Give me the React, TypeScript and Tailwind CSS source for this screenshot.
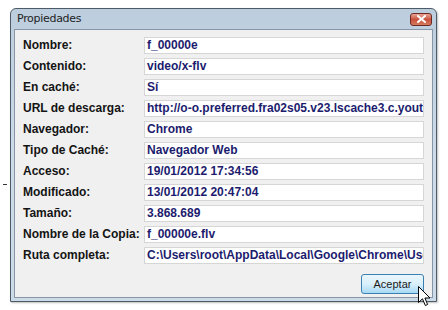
const ROWS: [string, string][] = [
  ['Nombre:', 'f_00000e'],
  ['Contenido:', 'video/x-flv'],
  ['En caché:', 'Sí'],
  ['URL de descarga:', 'http://o-o.preferred.fra02s05.v23.lscache3.c.youtube.com/videoplayback'],
  ['Navegador:', 'Chrome'],
  ['Tipo de Caché:', 'Navegador Web'],
  ['Acceso:', '19/01/2012 17:34:56'],
  ['Modificado:', '13/01/2012 20:47:04'],
  ['Tamaño:', '3.868.689'],
  ['Nombre de la Copia:', 'f_00000e.flv'],
  ['Ruta completa:', 'C:\\Users\\root\\AppData\\Local\\Google\\Chrome\\User Data\\Default\\Cache'],
];

function CloseButton() {
  return (
    <div className="w-[22px] h-[13px] rounded-[3px] border border-[#6e2a22] bg-gradient-to-b from-[#e7a597] via-[#c9503c] to-[#d47a5c] flex items-center justify-center">
      <svg width="9" height="8" viewBox="0 0 9 8">
        <path d="M1 1 L8 7 M8 1 L1 7" stroke="#fff" strokeWidth="2" strokeLinecap="square" />
      </svg>
    </div>
  );
}

function Cursor() {
  return (
    <svg className="absolute left-[418px] top-[286px]" width="13" height="21" viewBox="0 0 13 21">
      <path
        d="M0.5 0.5 L0.5 16.5 L4.5 12.8 L7.3 19.5 L9.6 18.5 L6.9 12 L12 12 Z"
        fill="#fff"
        stroke="#000"
        strokeWidth="1"
        strokeLinejoin="miter"
      />
    </svg>
  );
}

export default function App() {
  return (
    <div className="relative w-[448px] h-[310px] bg-white overflow-hidden pl-[10px] pt-[8px] font-['Liberation_Sans',Arial,sans-serif]">
      <div className="absolute left-[3px] top-[184px] w-[4px] h-[1px] bg-[#333]" />

      {/* window */}
      <div className="w-[427px] h-[294px] rounded-t-[6px] border border-[#4d5b69] bg-gradient-to-b from-[#bccddd] via-[#cddbe9] to-[#cddbe9] flex flex-col px-[3px] pb-[3px] shadow-[1px_1px_2px_rgba(0,0,0,0.25)]">
        <div className="h-[20px] flex items-center justify-between pl-[3px] pr-[1px]">
          <span className="text-[11px] text-[#1e1e1e] font-['DejaVu_Sans',sans-serif] tracking-[-0.3px]">Propiedades</span>
          <CloseButton />
        </div>

        <div className="flex-1 border border-[#8797a8] bg-[#f0f0f0] pl-[8px] pr-[8px] pt-[7px] flex flex-col">
          <div className="flex flex-col gap-[4px]">
            {ROWS.map(([label, value]) => (
              <div key={label} className="flex items-center h-[17px]">
                <div className="w-[121px] shrink-0 text-[12px] leading-[17px] font-bold text-[#141414]">{label}</div>
                <div className="w-[281px] h-[17px] border border-[#d6d6d6] bg-white pl-[2px] overflow-hidden whitespace-nowrap text-[12px] font-bold text-[#1c1c6e] leading-[15px]">
                  {value}
                </div>
              </div>
            ))}
          </div>

          <div className="flex justify-end mt-[10px]">
            <button className="w-[63px] h-[20px] rounded-[3px] border border-[#3c7fb1] bg-gradient-to-b from-[#eaf6fd] via-[#d9f0fc] to-[#a7d9f5] text-[11px] text-[#1a1a1a] leading-none">
              Aceptar
            </button>
          </div>
        </div>
      </div>

      <Cursor />
    </div>
  );
}
